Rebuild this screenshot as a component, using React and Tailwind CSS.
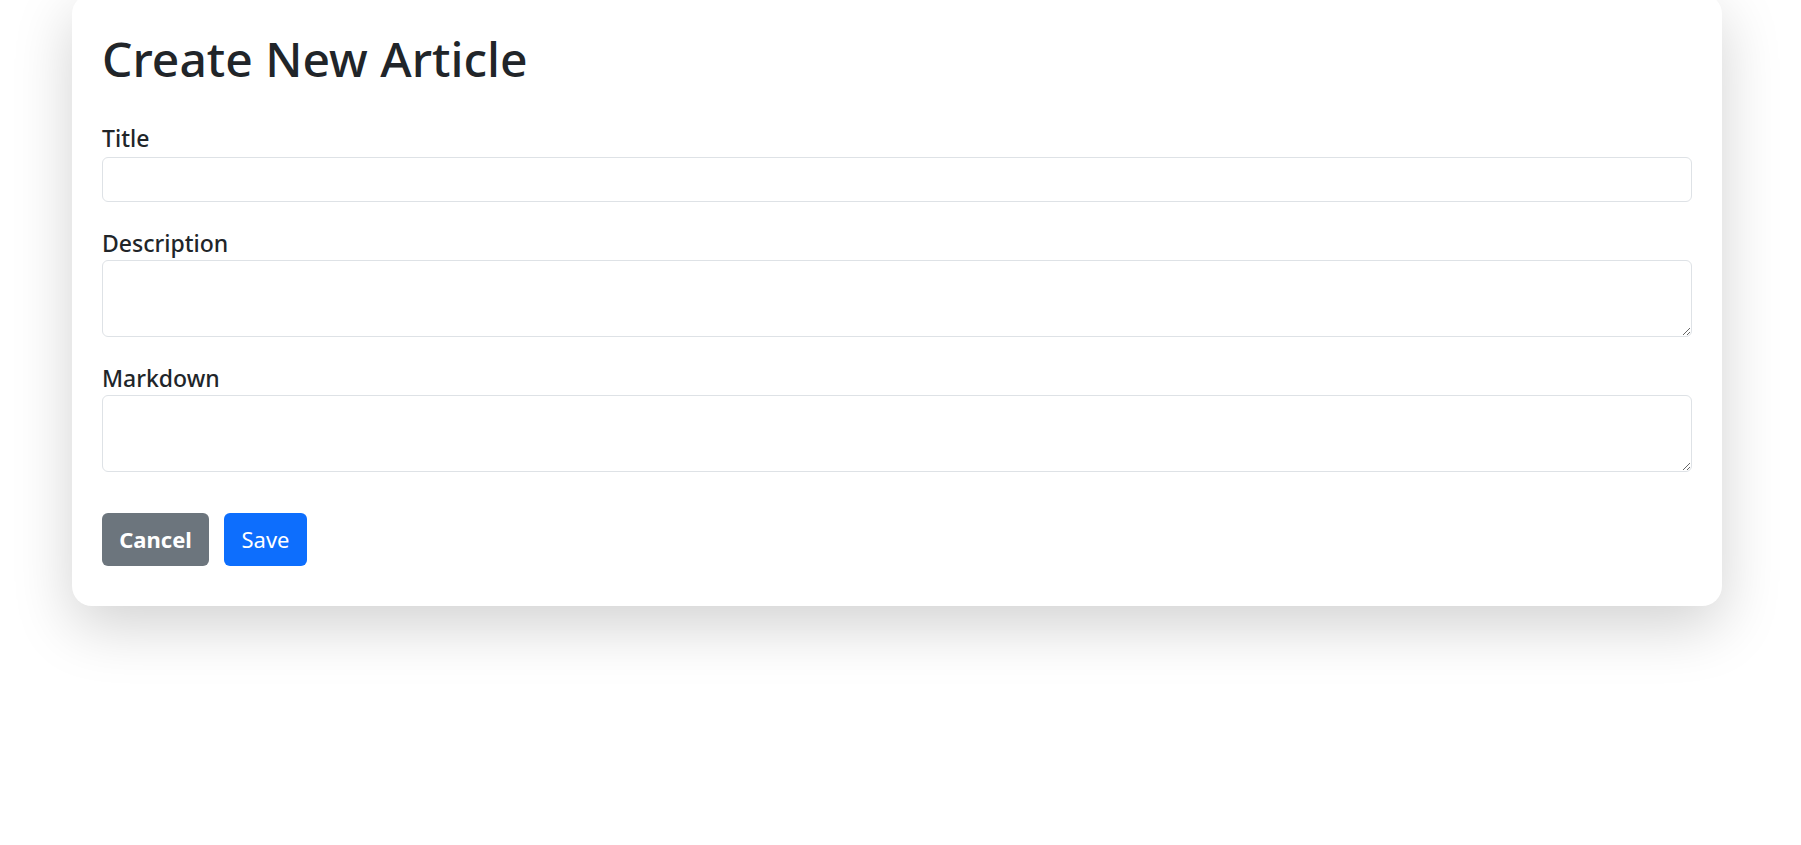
import React, { useState } from 'react';

export default function App() {
  const [form, setForm] = useState({ title: '', description: '', markdown: '' });
  const update = (key) => (e) => setForm({ ...form, [key]: e.target.value });

  return (
    <div className="min-h-[845px] bg-white text-[#212529] overflow-hidden" style={{ fontFamily: '"Noto Sans", "Open Sans", sans-serif' }}>
      <div className="ml-[72px] -mt-[6px] w-[1650px] bg-white rounded-[20px] shadow-[0_20px_60px_rgba(0,0,0,0.18)] px-[30px] pt-[36px] pb-[40px]">
        <h1 className="text-[48px] leading-[1.2] font-medium mb-[34px]">Create New Article</h1>

        {/* Title */}
        <label className="block text-[23px] leading-[33px] font-medium mb-[2px]">Title</label>
        <input
          type="text"
          value={form.title}
          onChange={update('title')}
          className="block w-full h-[45px] px-4 border border-[#dee2e6] rounded-[6px] outline-none text-[20px]"
        />

        {/* Description */}
        <label className="block text-[23px] leading-[33px] font-medium mt-[25px]">Description</label>
        <textarea
          value={form.description}
          onChange={update('description')}
          className="block w-full h-[77px] px-4 py-2 border border-[#dee2e6] rounded-[6px] outline-none text-[20px]"
        />

        {/* Markdown */}
        <label className="block text-[23px] leading-[33px] font-medium mt-[25px]">Markdown</label>
        <textarea
          value={form.markdown}
          onChange={update('markdown')}
          className="block w-full h-[77px] px-4 py-2 border border-[#dee2e6] rounded-[6px] outline-none text-[20px]"
        />

        <div className="flex items-center gap-[15px] mt-[41px]">
          <button className="w-[107px] h-[53px] rounded-[6px] bg-[#6c757d] text-white text-[22px] font-bold flex items-center justify-center">
            Cancel
          </button>
          <button className="w-[83px] h-[53px] rounded-[6px] bg-[#0d6efd] text-white text-[22px] flex items-center justify-center">
            Save
          </button>
        </div>
      </div>
    </div>
  );
}
